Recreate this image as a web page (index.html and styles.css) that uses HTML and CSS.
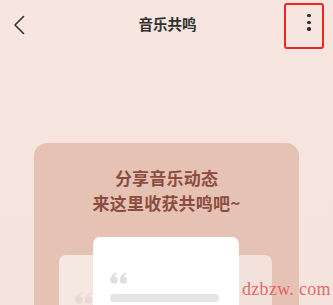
FILE: index.html
```html
<!DOCTYPE html>
<html lang="zh-CN">
<head>
<meta charset="utf-8">
<title>音乐共鸣</title>
<link rel="stylesheet" href="styles.css">
</head>
<body>
<div class="page">
  <header class="topbar">
    <div class="back">
      <svg width="12" height="20" viewBox="0 0 12 20"><path d="M10.5 1.5 L2 10 L10.5 18.5" fill="none" stroke="#333" stroke-width="1.6" stroke-linecap="round" stroke-linejoin="round"/></svg>
    </div>
    <h1 class="title">音乐共鸣</h1>
    <div class="more">
      <span class="dot"></span><span class="dot"></span><span class="dot"></span>
    </div>
  </header>
  <main class="main">
    <section class="card">
      <p class="slogan">分享音乐动态<br>来这里收获共鸣吧~</p>
      <div class="stack">
        <div class="paper back-paper">
          <svg class="quote" width="19" height="12" viewBox="0 0 19 12"><g fill="#ead9d2"><circle cx="4" cy="8.2" r="3.6"/><path d="M0.5 8.5 C0.4 4.5 2.5 1.6 6.6 0.4 L7.2 1.7 C4.8 2.7 3.7 4.6 3.8 6.5 Z"/><circle cx="13.5" cy="8.2" r="3.6"/><path d="M10 8.5 C9.9 4.5 12 1.6 16.1 0.4 L16.7 1.7 C14.3 2.7 13.2 4.6 13.3 6.5 Z"/></g></svg>
        </div>
        <div class="paper front-paper">
          <svg class="quote" width="19" height="12" viewBox="0 0 19 12"><g fill="#dedede"><circle cx="4" cy="8.2" r="3.6"/><path d="M0.5 8.5 C0.4 4.5 2.5 1.6 6.6 0.4 L7.2 1.7 C4.8 2.7 3.7 4.6 3.8 6.5 Z"/><circle cx="13.5" cy="8.2" r="3.6"/><path d="M10 8.5 C9.9 4.5 12 1.6 16.1 0.4 L16.7 1.7 C14.3 2.7 13.2 4.6 13.3 6.5 Z"/></g></svg>
          <div class="line"></div>
        </div>
      </div>
    </section>
  </main>
  <div class="watermark">dzbzw. com</div>
</div>
</body>
</html>
```

FILE: styles.css
```css
html, body {
  margin: 0;
  padding: 0;
}
body {
  width: 333px;
  height: 305px;
  overflow: hidden;
  background: #f5e6df;
  font-family: "Noto Sans CJK SC", "Noto Sans", sans-serif;
}
.page {
  position: relative;
  width: 333px;
  height: 305px;
  overflow: hidden;
  background: linear-gradient(#f6e6df, #f4e4dd);
}
.topbar {
  display: grid;
  grid-template-columns: 1fr auto 1fr;
  align-items: start;
  padding: 3px 9px 0 11px;
  height: 46px;
}
.back {
  margin-top: 12px;
  margin-left: 2px;
  width: 12px;
  height: 20px;
}
.back svg { display: block; }
.title {
  margin: 11px 0 0 0;
  font-size: 14.5px;
  line-height: 20px;
  font-weight: 700;
  color: #2f2f2f;
}
.more {
  justify-self: end;
  box-sizing: border-box;
  width: 40px;
  height: 46px;
  border: 2.7px solid #ec2820;
  border-radius: 3px;
  display: flex;
  flex-direction: column;
  align-items: center;
  padding-top: 9px;
  padding-left: 10px;
  gap: 3.3px;
}
.dot {
  width: 3.4px;
  height: 3.4px;
  border-radius: 50%;
  background: #2b2b2b;
}
.main {
  padding: 94px 34px 0 34px;
}
.card {
  height: 200px;
  border-radius: 13px;
  background: #e6c2b5;
  overflow: hidden;
  padding-top: 22px;
  box-sizing: border-box;
}
.slogan {
  margin: 0;
  text-align: center;
  font-size: 17px;
  line-height: 25px;
  font-weight: 700;
  color: #8c4d3f;
  letter-spacing: 0.2px;
}
.stack {
  display: grid;
  margin-top: 22px;
}
.paper {
  grid-area: 1 / 1;
  border-radius: 7px;
  height: 120px;
}
.back-paper {
  margin: 18px 27px 0 25px;
  background: linear-gradient(90deg, rgba(255,255,255,0.62), rgba(255,255,255,0.5));
  padding: 37px 0 0 16px;
  box-sizing: border-box;
}
.front-paper {
  margin: 0 60px 0 59px;
  background: #ffffff;
  padding: 35px 0 0 17px;
  box-sizing: border-box;
}
.quote { display: block; }
.line {
  margin-top: 10px;
  width: 109px;
  height: 8px;
  border-radius: 4px;
  background: #e4e4e4;
}
.watermark {
  position: absolute;
  left: 242px;
  top: 279px;
  white-space: nowrap;
  font-family: "Liberation Serif", "DejaVu Serif", serif;
  font-size: 18px;
  line-height: 20px;
  letter-spacing: 0.3px;
  color: rgba(226, 80, 80, 0.85);
}
```
